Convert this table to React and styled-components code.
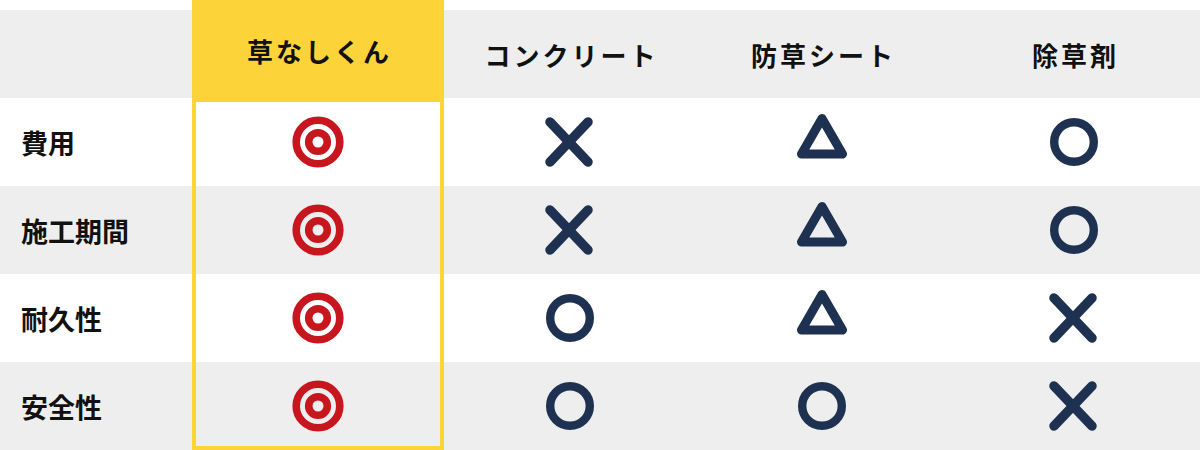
import React from 'react';
import styled, { createGlobalStyle } from 'styled-components';

const NAVY = '#1e3151';
const RED = '#c8161e';
const YELLOW = '#fdd33a';
const GRAY = '#eeeeee';

const GlobalStyle = createGlobalStyle`
    html, body {
        margin: 0;
        padding: 0;
        background: #ffffff;
    }
    body {
        font-family: "Noto Sans CJK JP", "Noto Sans", sans-serif;
        color: #111111;
    }
`;

const Table = styled.div`
    width: 1200px;
    height: 450px;
    display: grid;
    grid-template-columns: 192px repeat(4, 252px);
    grid-template-rows: 10px repeat(5, 88px);
`;

const RowBg = styled.div`
    grid-column: 1 / -1;
    grid-row: ${p => p.$row};
    background: ${p => (p.$shade ? GRAY : '#ffffff')};
`;

// yellow frame round the 草なしくん column
const Frame = styled.div`
    grid-column: 2;
    grid-row: 1 / -1;
    box-sizing: border-box;
    border: 4px solid ${YELLOW};
    border-top: none;
    display: flex;
    flex-direction: column;
`;

const FrameHead = styled.div`
    height: 102px;
    background: ${YELLOW};
    margin: 0 -4px;
`;

const HeadCell = styled.div`
    grid-column: ${p => p.$col};
    grid-row: ${p => (p.$featured ? '1 / 3' : '2')};
    height: ${p => (p.$featured ? '100px' : 'auto')};
    display: flex;
    align-items: center;
    justify-content: center;
    font-size: 26px;
    font-weight: 700;
    letter-spacing: 3px;
    padding-left: 3px;
    position: relative;
`;

const Label = styled.div`
    grid-column: 1;
    grid-row: ${p => p.$row};
    display: flex;
    align-items: center;
    padding-left: 21px;
    font-size: 27px;
    font-weight: 700;
    position: relative;
`;

const Cell = styled.div`
    grid-column: ${p => p.$col};
    grid-row: ${p => p.$row};
    display: flex;
    align-items: center;
    justify-content: center;
    position: relative;
`;

const Mark = styled.svg`
    display: block;
    margin-left: ${p => p.$dx || 0}px;
    margin-bottom: ${p => p.$lift || 0}px;
`;

const DoubleCircle = () => (
    <Mark width="52" height="52" viewBox="0 0 52 52">
        <circle cx="26" cy="26" r="21.8" fill="none" stroke={RED} strokeWidth="7.6" />
        <circle cx="26" cy="26" r="9.3" fill="none" stroke={RED} strokeWidth="7.6" />
    </Mark>
);

const Circle = () => (
    <Mark width="48" height="48" viewBox="0 0 48 48">
        <circle cx="24" cy="24" r="19.8" fill="none" stroke={NAVY} strokeWidth="8.4" />
    </Mark>
);

const Triangle = () => (
    <Mark width="50" height="46" viewBox="0 0 50 46" $lift={12}>
        <polygon points="25,5.5 45.5,41 4.5,41" fill="none" stroke={NAVY}
            strokeWidth="9" strokeLinejoin="round" />
    </Mark>
);

const Cross = () => (
    <Mark width="48" height="50" viewBox="0 0 48 50" $dx={-2}>
        <g stroke={NAVY} strokeWidth="9.5" strokeLinecap="round">
            <line x1="5" y1="5" x2="43" y2="45" />
            <line x1="43" y1="5" x2="5" y2="45" />
        </g>
    </Mark>
);

const MARKS = { '◎': DoubleCircle, '○': Circle, '△': Triangle, '×': Cross };

const heads = ['草なしくん', 'コンクリート', '防草シート', '除草剤'];

const rows = [
    { label: '費用', marks: ['◎', '×', '△', '○'] },
    { label: '施工期間', marks: ['◎', '×', '△', '○'] },
    { label: '耐久性', marks: ['◎', '○', '△', '×'] },
    { label: '安全性', marks: ['◎', '○', '○', '×'] },
];

export default function App() {
    return (
        <>
            <GlobalStyle />
            <Table>
                <RowBg $row={2} $shade />
                {rows.map((r, i) => (
                    <RowBg key={r.label} $row={i + 3} $shade={i % 2 === 1} />
                ))}
                <Frame>
                    <FrameHead />
                </Frame>
                {heads.map((h, i) => (
                    <HeadCell key={h} $col={i + 2} $featured={i === 0}>{h}</HeadCell>
                ))}
                {rows.map((r, i) => (
                    <React.Fragment key={r.label}>
                        <Label $row={i + 3}>{r.label}</Label>
                        {r.marks.map((m, j) => {
                            const Icon = MARKS[m];
                            return (
                                <Cell key={j} $row={i + 3} $col={j + 2}>
                                    <Icon />
                                </Cell>
                            );
                        })}
                    </React.Fragment>
                ))}
            </Table>
        </>
    );
}
